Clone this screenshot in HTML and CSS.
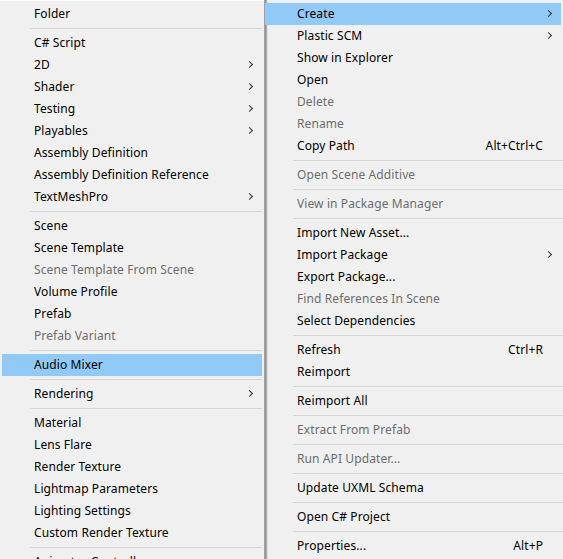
FILE: index.html
```html
<!DOCTYPE html>
<html>
<head>
<meta charset="utf-8">
<link rel="stylesheet" href="styles.css">
</head>
<body>
<div class="screen">
  <div class="menu menu-left">
    <div class="item"><span class="label">Folder</span></div>
    <div class="sep"></div>
    <div class="item"><span class="label">C# Script</span></div>
    <div class="item"><span class="label">2D</span><span class="arrow"></span></div>
    <div class="item"><span class="label">Shader</span><span class="arrow"></span></div>
    <div class="item"><span class="label">Testing</span><span class="arrow"></span></div>
    <div class="item"><span class="label">Playables</span><span class="arrow"></span></div>
    <div class="item"><span class="label">Assembly Definition</span></div>
    <div class="item"><span class="label">Assembly Definition Reference</span></div>
    <div class="item"><span class="label">TextMeshPro</span><span class="arrow"></span></div>
    <div class="sep"></div>
    <div class="item"><span class="label">Scene</span></div>
    <div class="item"><span class="label">Scene Template</span></div>
    <div class="item disabled"><span class="label">Scene Template From Scene</span></div>
    <div class="item"><span class="label">Volume Profile</span></div>
    <div class="item"><span class="label">Prefab</span></div>
    <div class="item disabled"><span class="label">Prefab Variant</span></div>
    <div class="sep"></div>
    <div class="item active"><span class="label">Audio Mixer</span></div>
    <div class="sep"></div>
    <div class="item"><span class="label">Rendering</span><span class="arrow"></span></div>
    <div class="sep"></div>
    <div class="item"><span class="label">Material</span></div>
    <div class="item"><span class="label">Lens Flare</span></div>
    <div class="item"><span class="label">Render Texture</span></div>
    <div class="item"><span class="label">Lightmap Parameters</span></div>
    <div class="item"><span class="label">Lighting Settings</span></div>
    <div class="item"><span class="label">Custom Render Texture</span></div>
    <div class="sep"></div>
    <div class="item"><span class="label">Animator Controller</span></div>
  </div>
  <div class="menu menu-right">
    <div class="item active"><span class="label">Create</span><span class="arrow"></span></div>
    <div class="item"><span class="label">Plastic SCM</span><span class="arrow"></span></div>
    <div class="item"><span class="label">Show in Explorer</span></div>
    <div class="item"><span class="label">Open</span></div>
    <div class="item disabled"><span class="label">Delete</span></div>
    <div class="item disabled"><span class="label">Rename</span></div>
    <div class="item"><span class="label">Copy Path</span><span class="shortcut">Alt+Ctrl+C</span></div>
    <div class="sep"></div>
    <div class="item disabled"><span class="label">Open Scene Additive</span></div>
    <div class="sep"></div>
    <div class="item disabled"><span class="label">View in Package Manager</span></div>
    <div class="sep"></div>
    <div class="item"><span class="label">Import New Asset...</span></div>
    <div class="item"><span class="label">Import Package</span><span class="arrow"></span></div>
    <div class="item"><span class="label">Export Package...</span></div>
    <div class="item disabled"><span class="label">Find References In Scene</span></div>
    <div class="item"><span class="label">Select Dependencies</span></div>
    <div class="sep"></div>
    <div class="item"><span class="label">Refresh</span><span class="shortcut">Ctrl+R</span></div>
    <div class="item"><span class="label">Reimport</span></div>
    <div class="sep"></div>
    <div class="item"><span class="label">Reimport All</span></div>
    <div class="sep"></div>
    <div class="item disabled"><span class="label">Extract From Prefab</span></div>
    <div class="sep"></div>
    <div class="item disabled"><span class="label">Run API Updater...</span></div>
    <div class="sep"></div>
    <div class="item"><span class="label">Update UXML Schema</span></div>
    <div class="sep"></div>
    <div class="item"><span class="label">Open C# Project</span></div>
    <div class="sep"></div>
    <div class="item"><span class="label">Properties...</span><span class="shortcut">Alt+P</span></div>
  </div>
</div>
</body>
</html>
```
FILE: styles.css
```css
html, body {
  margin: 0;
  padding: 0;
  background: #f0f0f0;
}
body {
  width: 563px;
  height: 559px;
  overflow: hidden;
  font-family: "Noto Sans", "Liberation Sans", sans-serif;
  font-size: 12px;
  color: #000;
}
.screen {
  display: flex;
  height: 559px;
  overflow: hidden;
}
.menu {
  background: #f0f0f0;
  padding-top: 3px;
  box-sizing: border-box;
}
.menu-left {
  width: 264px;
  flex: none;
  padding-left: 2px;
  padding-right: 2px;
  border-top: 1px solid #fbfbfb;
  padding-top: 2px;
}
.menu-right {
  flex: 1;
  padding-left: 1px;
  padding-right: 2px;
  background: linear-gradient(to right, #b4b4b4 0, #8c8c8c 1px, #9a9a9a 2px, #c6c6c6 3px, #f0f0f0 4px);
}
.item {
  height: 22px;
  box-sizing: border-box;
  display: flex;
  align-items: center;
  padding-left: 32px;
  padding-right: 9px;
  padding-bottom: 2px;
  white-space: nowrap;
  letter-spacing: 0.1px;
}
.item .label {
  flex: 1;
}
.item.disabled {
  color: #6d6d6d;
}
.item.active {
  background: #91c9f7;
}
.shortcut {
  padding-right: 9px;
}
.arrow {
  width: 5px;
  height: 8px;
  position: relative;
}
.arrow::before {
  content: "";
  position: absolute;
  left: -1px;
  top: 2px;
  width: 4px;
  height: 4px;
  border-right: 1px solid #333;
  border-bottom: 1px solid #333;
  transform: rotate(-45deg);
}
.sep {
  height: 1px;
  background: #d7d7d7;
  margin: 3px 0 3px 28px;
}
.menu-right .sep {
  margin-left: 28px;
  margin-right: -2px;
}
```
